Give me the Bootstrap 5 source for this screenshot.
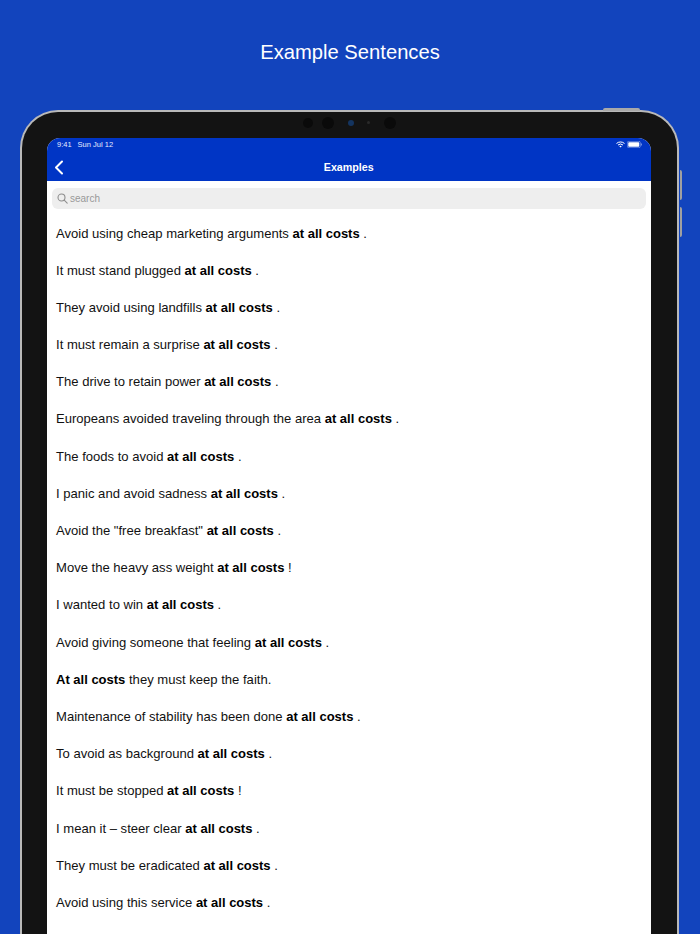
<!DOCTYPE html>
<html lang="en">
<head>
<meta charset="utf-8">
<title>Example Sentences</title>
<link href="https://cdn.jsdelivr.net/npm/bootstrap@5.3.0/dist/css/bootstrap.min.css" rel="stylesheet">
<style>
html,body{height:934px;overflow:hidden}
body{background:#1244bd;font-family:"Liberation Sans",Arial,sans-serif;color:#111}
.promo-title{height:110px;padding-top:39px;font-size:20.2px;line-height:27px;color:#fff;margin:0;font-weight:400;text-align:center}
.tablet-wrap{position:relative;margin:0 21px 0 20px}
.tablet{height:824px;background:#131313;border:solid #b9b9b9;border-width:2.5px 2.5px 0;border-radius:38px 38px 0 0;padding:25.5px 26.5px 0 25px;position:relative}
.hw-top{position:absolute;top:-4px;left:581px;width:37px;height:3px;background:#a9a9a9;border-radius:2px 2px 0 0}
.hw-side{position:absolute;right:-4.500px;width:2px;height:30px;background:#a0a0a0;border-radius:0 2px 2px 0}
.hw-a{top:58px}.hw-b{top:95px}
.sensors{position:absolute;top:0;left:0;right:0;height:26px}
.sensor{position:absolute;border-radius:50%;background:#0a0a0a}
.s1{left:281px;top:6px;width:10px;height:10px}
.s2{left:300px;top:5px;width:12px;height:12px}
.s3{left:326px;top:8px;width:6px;height:6px;background:#14345f}
.s4{left:345px;top:9px;width:3px;height:3px;background:#2a2a2a}
.s5{left:362px;top:5px;width:12px;height:12px}
.screen{background:#fff;height:100%;border-radius:13px 13px 0 0;overflow:hidden}
.appbar{background:#0035c5;height:43px;color:#fff;position:relative}
.status{position:absolute;top:2px;left:10px;right:9px;font-size:7.5px;line-height:10px;color:#e6ecff}
.status span+span{margin-left:6px}
.status-icons{gap:2px}
.back{position:absolute;left:7px;top:22px}
.bar-title{position:absolute;left:0;right:0;top:22px;text-align:center;font-size:10.7px;line-height:14px;font-weight:700;color:#fff}
.searchbox{margin:7px 5px 0;height:21px;background:#eee;border-radius:6px;font-size:10px;color:#999;padding-left:5px;line-height:21px;gap:2px}
.sentences{margin:6px 0 0;padding:0 9px}
.sentences li{height:37.2px;line-height:37.2px;font-size:13.07px;white-space:nowrap;color:#111;list-style:none}
.sentences b{font-weight:700;font-size:13px;color:#000}
</style>
</head>
<body>
<h1 class="promo-title">Example Sentences</h1>
<div class="tablet-wrap">
  <div class="tablet">
    <div class="hw-top"></div>
    <div class="hw-side hw-a"></div>
    <div class="hw-side hw-b"></div>
    <div class="sensors">
      <div class="sensor s1"></div>
      <div class="sensor s2"></div>
      <div class="sensor s3"></div>
      <div class="sensor s4"></div>
      <div class="sensor s5"></div>
    </div>
    <div class="screen d-flex flex-column">
      <div class="appbar">
        <div class="status d-flex justify-content-between align-items-center">
          <div><span>9:41</span><span>Sun Jul 12</span></div>
          <div class="status-icons d-flex align-items-center">
            <svg width="9" height="7" viewBox="0 0 18 14" fill="none" stroke="#fff" stroke-width="2"><path d="M1 5a12 12 0 0 1 16 0M4 8a8 8 0 0 1 10 0"/><path d="M6.500 10.500 9 13l2.500-2.500a4 4 0 0 0-5 0z" fill="#fff" stroke="none"/></svg>
            <svg width="15" height="7" viewBox="0 0 30 14"><rect x=".6" y=".6" width="26" height="12.800" rx="3" fill="none" stroke="#fff" stroke-opacity=".6" stroke-width="1.200"/><rect x="2.500" y="2.500" width="22" height="9" rx="1.500" fill="#fff"/><rect x="28" y="5" width="1.500" height="4" fill="#fff" fill-opacity=".6"/></svg>
          </div>
        </div>
        <svg class="back" width="10" height="15" viewBox="0 0 10 15" fill="none" stroke="#fff" stroke-width="2" stroke-linecap="round" stroke-linejoin="round"><path d="M8 1.500 2 7.500l6 6"/></svg>
        <div class="bar-title">Examples</div>
      </div>
      <div class="searchbox d-flex align-items-center">
        <svg width="11" height="11" viewBox="0 0 11 11" fill="none" stroke="#8e8e8e" stroke-width="1.100" stroke-linecap="round"><circle cx="4.500" cy="4.500" r="3.500"/><path d="m7.200 7.200 3 3"/></svg>
        <span>search</span>
      </div>
      <ul class="sentences">
        <li>Avoid using cheap marketing arguments <b>at all costs</b> .</li>
        <li>It must stand plugged <b>at all costs</b> .</li>
        <li>They avoid using landfills <b>at all costs</b> .</li>
        <li>It must remain a surprise <b>at all costs</b> .</li>
        <li>The drive to retain power <b>at all costs</b> .</li>
        <li>Europeans avoided traveling through the area <b>at all costs</b> .</li>
        <li>The foods to avoid <b>at all costs</b> .</li>
        <li>I panic and avoid sadness <b>at all costs</b> .</li>
        <li>Avoid the "free breakfast" <b>at all costs</b> .</li>
        <li>Move the heavy ass weight <b>at all costs</b> !</li>
        <li>I wanted to win <b>at all costs</b> .</li>
        <li>Avoid giving someone that feeling <b>at all costs</b> .</li>
        <li><b>At all costs</b> they must keep the faith.</li>
        <li>Maintenance of stability has been done <b>at all costs</b> .</li>
        <li>To avoid as background <b>at all costs</b> .</li>
        <li>It must be stopped <b>at all costs</b> !</li>
        <li>I mean it – steer clear <b>at all costs</b> .</li>
        <li>They must be eradicated <b>at all costs</b> .</li>
        <li>Avoid using this service <b>at all costs</b> .</li>
      </ul>
    </div>
  </div>
</div>
<script src="https://cdn.jsdelivr.net/npm/bootstrap@5.3.0/dist/js/bootstrap.bundle.min.js"></script>
</body>
</html>
